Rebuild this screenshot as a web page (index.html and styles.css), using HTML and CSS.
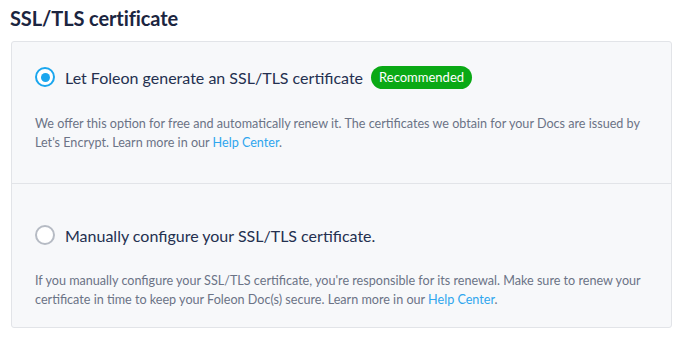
FILE: index.html
```html
<!DOCTYPE html>
<html lang="en">
<head>
    <meta charset="UTF-8">
    <meta name="viewport" content="width=device-width, initial-scale=1.0">
    <title>SSL/TLS certificate</title>
    <link rel="stylesheet" href="styles.css">
</head>
<body>
    <div class="container">
        <h1>SSL/TLS certificate</h1>

        <div class="card">
            <div class="option option-auto">
                <label class="option-row">
                    <span class="radio checked"></span>
                    <span class="option-title">Let Foleon generate an SSL/TLS certificate</span>
                    <span class="badge">Recommended</span>
                </label>
                <p class="option-desc">We offer this option for free and automatically renew it. The certificates we obtain for your Docs are issued by Let's Encrypt. Learn more in our <a href="#">Help Center</a>.</p>
            </div>
            <div class="option option-manual">
                <label class="option-row">
                    <span class="radio"></span>
                    <span class="option-title">Manually configure your SSL/TLS certificate.</span>
                </label>
                <p class="option-desc">If you manually configure your SSL/TLS certificate, you're responsible for its renewal. Make sure to renew your certificate in time to keep your Foleon Doc(s) secure. Learn more in our <a href="#">Help Center</a>.</p>
            </div>
        </div>
    </div>
</body>
</html>
```

FILE: styles.css
```css
body {
    margin: 0;
    font-family: Lato, "Open Sans", Arial, sans-serif;
    background: #fff;
    color: #222b45;
}
.container {
    padding: 5px 16px 0 11px;
}
h1 {
    margin: 0 0 10px -1px;
    font-size: 20px;
    line-height: 26px;
    font-weight: 700;
    letter-spacing: -0.1px;
    color: #1b2540;
}
.card {
    background: #f7f8fa;
    border: 1px solid #e2e4e8;
    border-radius: 3px;
}
.option-auto {
    padding: 23px 23px 31px;
    border-bottom: 1px solid #e2e4e8;
}
.option-manual {
    padding: 39px 23px 18px;
}
.option-row {
    display: flex;
    align-items: center;
    height: 24px;
}
.radio {
    box-sizing: border-box;
    width: 20px;
    height: 20px;
    border-radius: 50%;
    border: 2px solid #b6bbc4;
    background: #fff;
    margin-right: 10px;
    flex-shrink: 0;
    display: flex;
    align-items: center;
    justify-content: center;
}
.radio.checked {
    border: 2.5px solid #1aa6ee;
}
.radio.checked::after {
    content: "";
    width: 9px;
    height: 9px;
    border-radius: 50%;
    background: #1aa6ee;
}
.option-title {
    font-size: 16px;
    color: #243050;
}
.badge {
    margin-left: 8px;
    background: #0aa915;
    color: #fff;
    font-size: 13px;
    line-height: 23px;
    padding: 0 8px;
    border-radius: 12px;
}
.option-desc {
    margin: 25px 0 0;
    font-size: 12.6px;
    line-height: 19px;
    color: #6b7386;
}
.option-manual .option-desc {
    margin-top: 24px;
}
.option-desc a {
    color: #2fa6ee;
    text-decoration: none;
}
```
